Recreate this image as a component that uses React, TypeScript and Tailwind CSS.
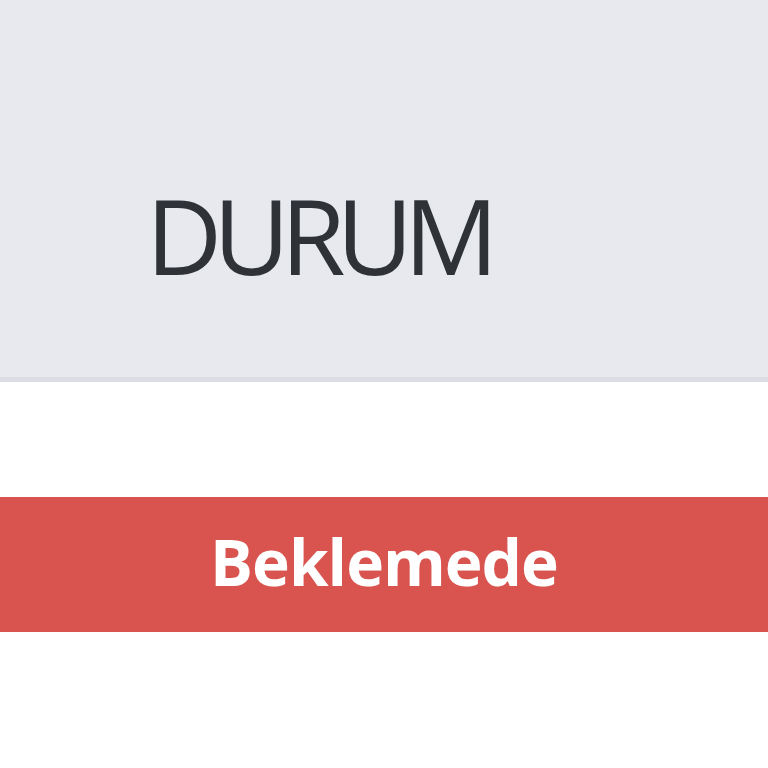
import React from 'react';

export default function App() {
  return (
    <div className="h-[768px] w-[768px] overflow-hidden bg-white" style={{ fontFamily: '"Open Sans", sans-serif' }}>
      {/* table header cell */}
      <div className="flex h-[382px] items-start border-b-[5px] border-[#dcdde3] bg-[#e7e9ee] pl-[146px] pt-[182px]">
        <span className="text-[105px] leading-none tracking-[-9px] text-[#2f3338]">DURUM</span>
      </div>
      <div className="h-[115px]" />
      {/* status badge */}
      <div className="flex h-[135px] items-center justify-center bg-[#d9534f]">
        <span className="pb-[6px] text-[64px] font-bold leading-none tracking-[-1px] text-white">Beklemede</span>
      </div>
    </div>
  );
}
